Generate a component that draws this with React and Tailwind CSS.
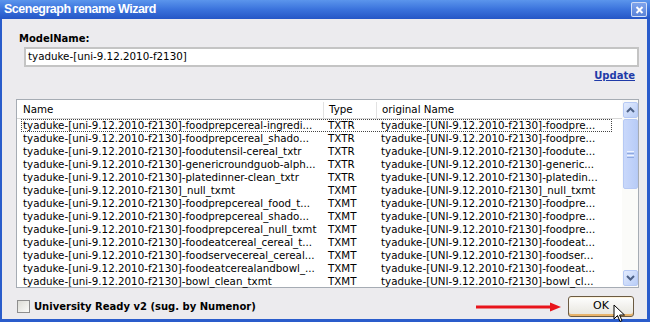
import React from "react";

const P = "tyaduke-[uni-9.12.2010-f2130]";
const O = "tyaduke-[UNI-9.12.2010-f2130]";

const rows = [
  [P + "-foodprepcereal-ingredi...", "TXTR", O + "-foodpre..."],
  [P + "-foodprepcereal_shado...", "TXTR", O + "-foodpre..."],
  [P + "-foodutensil-cereal_txtr", "TXTR", O + "-foodute..."],
  [P + "-genericroundguob-alph...", "TXTR", O + "-generic..."],
  [P + "-platedinner-clean_txtr", "TXTR", O + "-platedin..."],
  [P + "_null_txmt", "TXMT", O + "_null_txmt"],
  [P + "-foodprepcereal_food_t...", "TXMT", O + "-foodpre..."],
  [P + "-foodprepcereal_shado...", "TXMT", O + "-foodpre..."],
  [P + "-foodprepcereal_null_txmt", "TXMT", O + "-foodpre..."],
  [P + "-foodeatcereal_cereal_t...", "TXMT", O + "-foodeat..."],
  [P + "-foodservecereal_cereal...", "TXMT", O + "-foodser..."],
  [P + "-foodeatcerealandbowl_...", "TXMT", O + "-foodeat..."],
  [P + "-bowl_clean_txmt", "TXMT", O + "-bowl_cl..."],
];

const font = { fontFamily: '"DejaVu Sans", Verdana, sans-serif' };

// xp style scroll arrow button
const ScrollBtn = ({ up }) => (
  <div className="w-[15px] h-[16px] rounded-[2px] border border-[#b6c9f4] bg-gradient-to-br from-[#e2ebfd] to-[#b9cdf7] flex items-center justify-center">
    <svg width="9" height="6" viewBox="0 0 9 6">
      <path
        d={up ? "M1 5 L4.5 1.5 L8 5" : "M1 1 L4.5 4.5 L8 1"}
        fill="none"
        stroke="#4d6185"
        strokeWidth="2"
      />
    </svg>
  </div>
);

export default function App() {
  return (
    <div className="w-[650px] h-[322px] bg-[#2a5ccb] flex flex-col overflow-hidden relative" style={font}>
      {/* title bar */}
      <div className="h-[19px] flex items-center justify-between pl-[4px] pr-[3px] bg-gradient-to-b from-[#5b95ec] via-[#3a72dc] to-[#2556c6]">
        <span
          className="text-white font-bold text-[12.5px] tracking-[-0.5px]"
          style={{ fontFamily: '"Liberation Sans", Arial, sans-serif' }}
        >
          Scenegraph rename Wizard
        </span>
        <div className="w-[16px] h-[15px] rounded-[2px] border border-white/70 bg-gradient-to-b from-[#7fa4ec] to-[#5a83d8] flex items-center justify-center">
          <svg width="9" height="8" viewBox="0 0 9 8">
            <path d="M1.5 1 L7.5 7 M7.5 1 L1.5 7" stroke="white" strokeWidth="2" />
          </svg>
        </div>
      </div>

      {/* body */}
      <div className="flex-1 ml-[2px] mr-[3px] mb-[3px] bg-[#ecebee] flex flex-col">
        <div className="mt-[13px] ml-[17px] text-[10px] leading-[13px] font-bold text-black">ModelName:</div>
        <div className="mt-[2px] ml-[22px] mr-[8px] h-[20px] border-2 border-[#c4c4c4] bg-white flex items-center pl-[2px] text-[10.3px] text-black">
          {P}
        </div>
        <div className="flex justify-end mr-[12px] mt-[2px]">
          <span className="text-[10px] leading-[13px] font-bold text-[#1f3aa8] underline">Update</span>
        </div>

        {/* list */}
        <div className="mt-[17px] ml-[14px] mr-[8px] h-[189px] border border-[#a6acb4] bg-white flex">
          <div className="flex-1 flex flex-col text-[10.3px] text-black">
            <div className="h-[19px] flex items-center border-b border-[#d8d8d8] shrink-0 pt-[2px]">
              <div className="w-[307px] pl-[6px] border-r border-[#e2e2e2] h-full flex items-center">Name</div>
              <div className="w-[53px] pl-[5px] border-r border-[#e2e2e2] h-full flex items-center">Type</div>
              <div className="flex-1 pl-[5px]">original Name</div>
            </div>
            {rows.map((r, i) => (
              <div
                key={i}
                className={
                  "h-[13px] leading-[13px] flex whitespace-nowrap " +
                  (i === 0 ? "outline outline-1 outline-dotted outline-[#444] -outline-offset-1 ml-[4px] mr-[10px]" : "ml-[4px] mr-[10px]")
                }
              >
                <div className="w-[302px] pl-[2px] overflow-hidden">{r[0]}</div>
                <div className="w-[53px] pl-[5px] overflow-hidden">{r[1]}</div>
                <div className="flex-1 pl-[5px] overflow-hidden">{r[2]}</div>
              </div>
            ))}
          </div>
          {/* scrollbar */}
          <div className="w-[16px] bg-[#fbfbf9] flex flex-col pt-[2px] pb-[1px] items-center">
            <ScrollBtn up />
            <div className="flex-1 w-[15px] py-[1px]">
              <div className="h-[70px] rounded-[2px] border border-[#b6c9f4] bg-gradient-to-r from-[#c9d8fb] to-[#b8ccf7] flex flex-col items-center justify-center gap-[1px]">
                <div className="w-[7px] h-[1px] bg-[#eef3fd]" />
                <div className="w-[7px] h-[1px] bg-[#8fa9e0]" />
                <div className="w-[7px] h-[1px] bg-[#eef3fd]" />
                <div className="w-[7px] h-[1px] bg-[#8fa9e0]" />
              </div>
            </div>
            <ScrollBtn />
          </div>
        </div>

        {/* bottom row */}
        <div className="mt-[8px] ml-[15px] mr-[13px] flex items-center justify-between">
          <div className="flex items-center gap-[4px]">
            <div className="w-[13px] h-[13px] border border-[#8e8e8e] bg-gradient-to-br from-[#dcdcd6] to-[#fbfbf9]" />
            <span className="text-[10px] font-bold text-black">University Ready v2 (sug. by Numenor)</span>
          </div>
          <div className="flex items-center gap-[6px]">
            <svg width="86" height="10" viewBox="0 0 86 10">
              <path d="M0 5 H76" stroke="#e8141b" strokeWidth="3" />
              <path d="M74 0.5 L85 5 L74 9.5 Z" fill="#e8141b" />
            </svg>
            <div className="w-[66px] h-[21px] rounded-[3px] border border-[#6b5a42] bg-gradient-to-b from-[#fefefe] to-[#e6e4dc] shadow-[inset_0_-2px_0_#e8b36a,inset_0_1px_0_#fff4dc] flex items-center justify-center text-[11px] text-black">
              OK
            </div>
          </div>
        </div>
      </div>

      {/* mouse cursor */}
      <svg className="absolute left-[613px] top-[304px]" width="13" height="19" viewBox="0 0 13 19">
        <path d="M1 1 L1 15 L4.5 11.5 L7 17.5 L9 16.6 L6.6 11 L11.5 11 Z" fill="white" stroke="black" strokeWidth="1" />
      </svg>
    </div>
  );
}
